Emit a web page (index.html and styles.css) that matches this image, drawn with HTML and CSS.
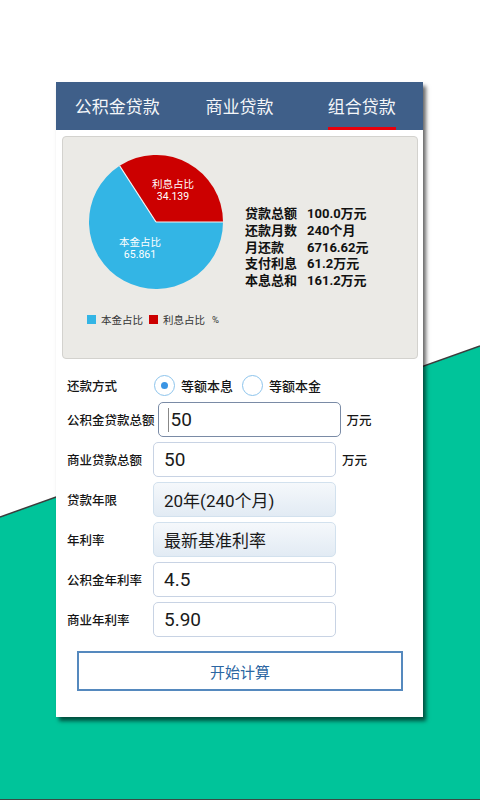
FILE: index.html
```html
<!DOCTYPE html>
<html lang="zh-CN">
<head>
<meta charset="utf-8">
<title>组合贷款</title>
<link rel="stylesheet" href="styles.css">
</head>
<body>
<svg class="bg" width="480" height="800" viewBox="0 0 480 800" aria-hidden="true">
  <polygon points="0,517 480,346 480,800 0,800" fill="#00c49a"/>
  <line x1="0" y1="517" x2="480" y2="346" stroke="#3c3c3c" stroke-width="1.5"/>
  <line x1="0" y1="799.5" x2="480" y2="799.5" stroke="#3a4a44" stroke-width="1"/>
</svg>
<div class="page">
  <div class="card">
    <div class="tabs">
      <div class="tab"><span class="tab-text">公积金贷款</span></div>
      <div class="tab"><span class="tab-text">商业贷款</span></div>
      <div class="tab active"><span class="tab-text">组合贷款</span></div>
    </div>

    <div class="chart">
      <div class="chart-main">
        <svg class="pie" width="134" height="134" viewBox="0 0 134 134">
          <path d="M67,67 L134,67 A67,67 0 0,0 30.6,10.75 Z" fill="#cc0000"/>
          <path d="M67,67 L30.6,10.75 A67,67 0 1,0 134,67 Z" fill="#33b5e5"/>
          <line x1="67" y1="67" x2="134" y2="67" stroke="#f4f4f4" stroke-width="1.2"/>
          <line x1="67" y1="67" x2="30.6" y2="10.75" stroke="#f4f4f4" stroke-width="1.2"/>
          <text class="pie-label" x="84" y="33">利息占比</text>
          <text class="pie-label" x="84" y="45">34.139</text>
          <text class="pie-label" x="51" y="91">本金占比</text>
          <text class="pie-label" x="51" y="103">65.861</text>
        </svg>
        <div class="stats">
          <div class="stat-k">贷款总额</div><div class="stat-v">100.0万元</div>
          <div class="stat-k">还款月数</div><div class="stat-v">240个月</div>
          <div class="stat-k">月还款</div><div class="stat-v">6716.62元</div>
          <div class="stat-k">支付利息</div><div class="stat-v">61.2万元</div>
          <div class="stat-k">本息总和</div><div class="stat-v">161.2万元</div>
        </div>
      </div>
      <div class="legend">
        <span class="sw sw-blue"></span><span class="lg-text">本金占比</span>
        <span class="sw sw-red"></span><span class="lg-text">利息占比</span>
        <span class="lg-pct">%</span>
      </div>
    </div>

    <div class="form">
      <div class="row radio-row">
        <div class="label">还款方式</div>
        <div class="radio on"></div><div class="radio-text">等额本息</div>
        <div class="radio second"></div><div class="radio-text">等额本金</div>
      </div>
      <div class="row first">
        <div class="label">公积金贷款总额</div>
        <div class="input focus"><span class="caret"></span>50</div>
        <div class="unit">万元</div>
      </div>
      <div class="row">
        <div class="label">商业贷款总额</div>
        <div class="input">50</div>
        <div class="unit">万元</div>
      </div>
      <div class="row">
        <div class="label">贷款年限</div>
        <div class="input select">20年(240个月)</div>
      </div>
      <div class="row">
        <div class="label">年利率</div>
        <div class="input select">最新基准利率</div>
      </div>
      <div class="row">
        <div class="label">公积金年利率</div>
        <div class="input">4.5</div>
      </div>
      <div class="row">
        <div class="label">商业年利率</div>
        <div class="input">5.90</div>
      </div>
      <div class="btn">开始计算</div>
    </div>
  </div>
</div>
</body>
</html>
```
FILE: styles.css
```css
html, body {
  margin: 0;
  padding: 0;
}
body {
  width: 480px;
  height: 800px;
  position: relative;
  overflow: hidden;
  background: #ffffff;
  font-family: Roboto, "Noto Sans CJK SC", sans-serif;
  color: #111;
}
.bg {
  position: absolute;
  left: 0;
  top: 0;
  z-index: 0;
}
.page {
  position: relative;
  z-index: 1;
  padding: 82px 0 0 56px;
}
.card {
  width: 367px;
  background: #fff;
  box-shadow: 3px 4px 4px rgba(0, 0, 0, 0.6);
  padding-bottom: 26px;
}
.tabs {
  display: flex;
  height: 48px;
  background: #3f5f89;
}
.tab {
  flex: 1;
  display: flex;
  justify-content: center;
  align-items: flex-start;
}
.tab-text {
  margin-top: 14px;
  font-size: 17px;
  line-height: 22px;
  color: #f4f6f9;
  padding-bottom: 9px;
  border-bottom: 3px solid transparent;
}
.tab.active .tab-text {
  border-bottom-color: #e8000c;
}

.chart {
  margin: 6px 5px 0 6px;
  height: 223px;
  box-sizing: border-box;
  background: #ebeae6;
  border: 1px solid #d3d2ce;
  border-radius: 4px;
  padding-top: 18px;
}
.chart-main {
  display: flex;
  align-items: flex-start;
  height: 134px;
  padding-left: 26px;
}
.pie {
  display: block;
  flex: 0 0 auto;
}
.pie-label {
  fill: #ffffff;
  font-size: 10.5px;
  text-anchor: middle;
  font-family: Roboto, "Noto Sans CJK SC", sans-serif;
}
.stats {
  margin-left: 22px;
  margin-top: 51px;
  display: grid;
  grid-template-columns: 62px auto;
  font-size: 13px;
  font-weight: bold;
  line-height: 16.75px;
  color: #111;
  white-space: nowrap;
}
.legend {
  display: flex;
  align-items: center;
  margin-top: 24px;
  padding-left: 24px;
  font-size: 10.5px;
  color: #333;
  height: 12px;
}
.sw {
  width: 9px;
  height: 9px;
  display: block;
}
.sw-blue { background: #33b5e5; }
.sw-red { background: #cc0000; margin-left: 6px; }
.lg-text { margin-left: 5px; }
.lg-pct { margin-left: 7px; font-size: 9.5px; }

.form {
  padding: 10px 0 0 11px;
}
.row {
  display: flex;
  align-items: center;
  height: 35px;
  margin-top: 5px;
}
.radio-row {
  height: 32px;
  margin-top: 0;
}
.row.first {
  margin-top: 1px;
}
.label {
  flex: 0 0 auto;
  min-width: 83px;
  margin-right: 3px;
  font-size: 12.5px;
  font-weight: 500;
  white-space: nowrap;
  color: #151515;
}
.radio {
  width: 21px;
  height: 21px;
  box-sizing: border-box;
  border: 1.5px solid #8dc4ec;
  border-radius: 50%;
  background: #fff;
  display: flex;
  align-items: center;
  justify-content: center;
  margin-left: 1px;
}
.radio.on::after {
  content: "";
  width: 7px;
  height: 7px;
  border-radius: 50%;
  background: #3a95e4;
}
.radio.second {
  margin-left: 9px;
}
.radio-text {
  margin-left: 6px;
  font-size: 13px;
  font-weight: 500;
  color: #151515;
}
.input {
  width: 183px;
  height: 35px;
  box-sizing: border-box;
  border: 1px solid #c8d3e4;
  border-radius: 5px;
  background: #fff;
  padding-left: 10px;
  display: flex;
  align-items: center;
  font-size: 19px;
  color: #1a1a1a;
}
.input.focus {
  border-color: #7a8ba6;
  padding-left: 9px;
}
.caret {
  width: 1.5px;
  height: 24px;
  background: #888;
  margin-right: 1.5px;
}
.input.select {
  background: linear-gradient(#f5f8fb, #e2ebf4);
  border-color: #d2e1ee;
  font-size: 17px;
}
.unit {
  margin-left: 6px;
  font-size: 12.5px;
  font-weight: 500;
  color: #151515;
}
.btn {
  margin: 14px 0 0 10px;
  width: 326px;
  height: 40px;
  box-sizing: border-box;
  border: 2px solid #5589be;
  display: flex;
  align-items: center;
  justify-content: center;
  font-size: 15px;
  color: #2b66a2;
}
```
